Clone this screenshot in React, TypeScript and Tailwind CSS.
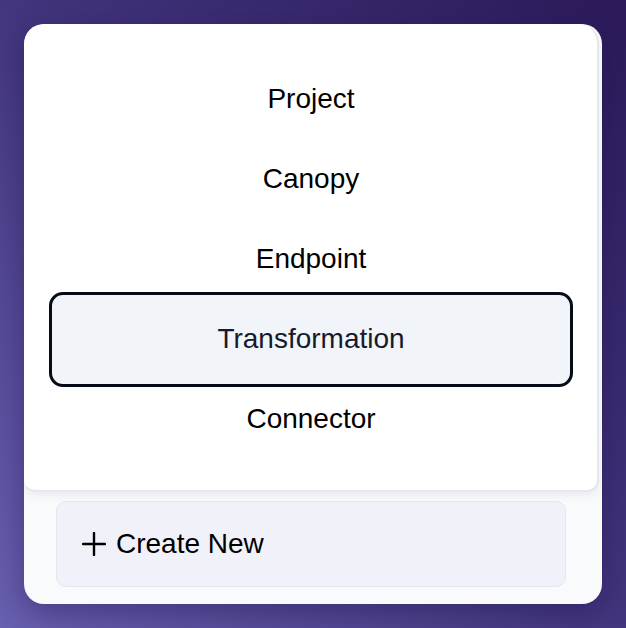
import React from "react";

const items = ["Project", "Canopy", "Endpoint", "Transformation", "Connector"];

export default function App() {
  return (
    <div
      className="w-[626px] h-[628px] bg-linear-to-tr from-[#6860b0] via-[#43357e] to-[#2c1a5a] p-[24px]"
      style={{ fontFamily: '"Liberation Sans", Arial, sans-serif' }}
    >
      <div className="w-[578px] h-[580px] rounded-[20px] bg-[#f9fafb] shadow-[0_10px_30px_rgba(20,10,60,0.35)] flex flex-col overflow-hidden">
        <div className="w-[575px] bg-white rounded-tl-[20px] rounded-tr-[20px] rounded-bl-[12px] rounded-br-[12px] border-r-[2px] border-b-[2px] border-[#e3e8ef] shadow-[0_4px_8px_rgba(0,0,0,0.06)] pl-[25px] pr-[24px] pt-[35px] pb-[31px] flex flex-col">
          {items.map((it) =>
            it === "Transformation" ? (
              <div
                key={it}
                className="h-[95px] -my-[7.5px] rounded-[14px] border-[3px] border-[#060b18] bg-[#f1f4f9] flex items-center justify-center text-[28px] text-[#161b2b]"
              >
                {it}
              </div>
            ) : (
              <div key={it} className="h-[80px] flex items-center justify-center text-[28px] text-black">
                {it}
              </div>
            )
          )}
        </div>
        <div className="pl-[32px] pr-[36px] pt-[9px]">
          <div className="h-[86px] rounded-[10px] bg-[#f0f1f9] border border-[#e1e6f0] flex items-center pl-[25px] gap-[10px] text-[28px] text-black">
            <svg width="24" height="24" viewBox="0 0 24 24" fill="none" stroke="currentColor" strokeWidth="2.4" strokeLinecap="round">
              <path d="M12 1v22M1 12h22" />
            </svg>
            <span>Create New</span>
          </div>
        </div>
      </div>
    </div>
  );
}
